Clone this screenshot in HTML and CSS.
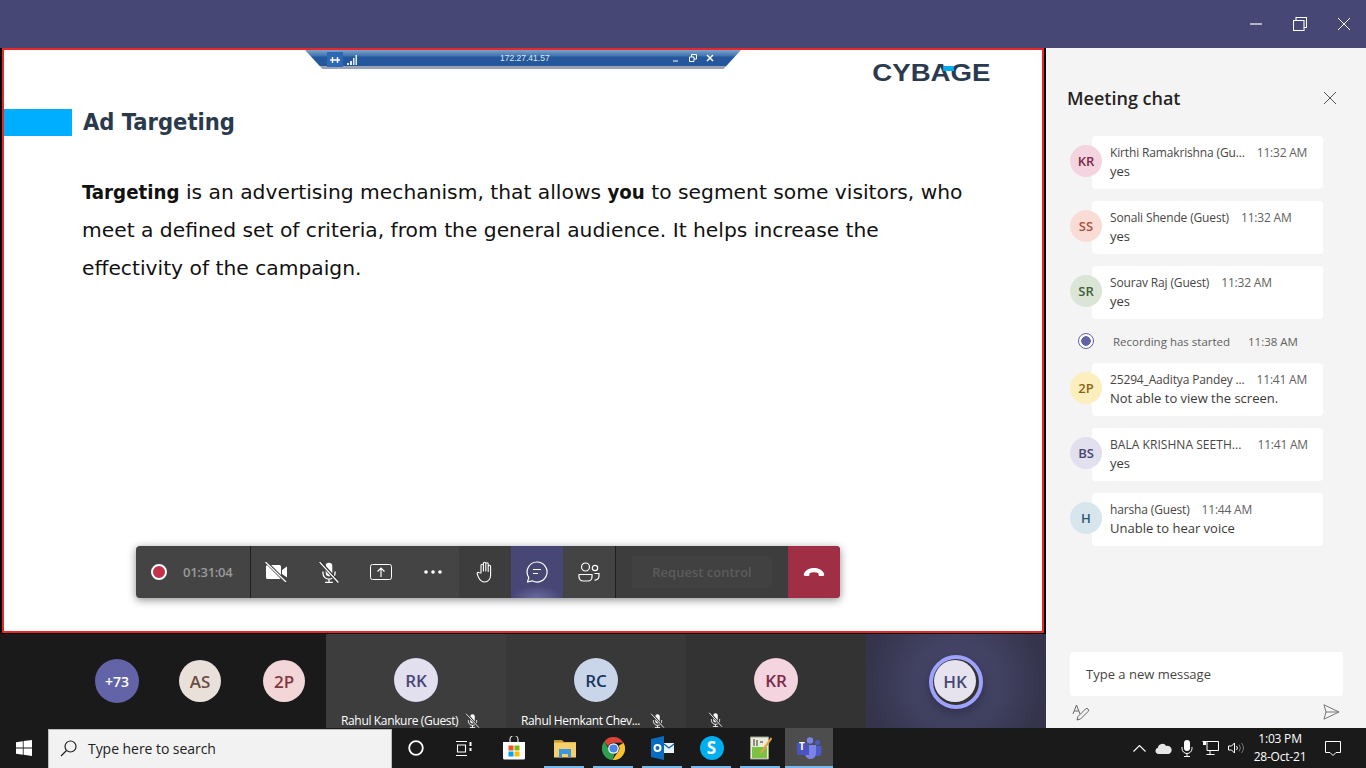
FILE: index.html
```html
<!DOCTYPE html>
<html lang="en">
<head>
    <meta charset="UTF-8">
    <meta name="viewport" content="width=device-width, initial-scale=1.0">
    <title>Meeting</title>
    <link rel="stylesheet" href="styles.css">
</head>
<body>
    <svg class="defs" width="0" height="0">
        <symbol id="mic-off" viewBox="0 0 20 20">
            <path d="M7 9V4.500a3 3 0 0 1 6 0V11a3 3 0 0 1-6 0z" fill="currentColor"/>
            <path d="M4.500 9.500V11a5.500 5.500 0 0 0 11 0V9.500M10 16.500V19.500M6.500 19.500h7" fill="none" stroke="currentColor" stroke-width="1.200"/>
            <path d="M2 1l16 18" stroke="#333" stroke-width="3"/>
            <path d="M1.500 1l17 18.500" stroke="currentColor" stroke-width="1.200"/>
        </symbol>
    </svg>

    <div class="titlebar">
        <svg class="win-btn" width="14" height="14" viewBox="0 0 14 14"><path d="M1 7h12" stroke="#fff" stroke-width="1.200"/></svg>
        <svg class="win-btn" width="14" height="14" viewBox="0 0 14 14"><path d="M.5 3.500h10.500v10H.500zM3 3.500V.5h10.500v10H11" fill="none" stroke="#fff" stroke-width="1.100"/></svg>
        <svg class="win-btn" width="14" height="14" viewBox="0 0 14 14"><path d="M1 1l12 12M13 1L1 13" stroke="#fff" stroke-width="1"/></svg>
    </div>

    <div class="app">
        <div class="meeting">
            <div class="stage">
                <div class="slide">
                    <div class="rd-bar">
                        <span class="rd-pin">
                            <svg width="10" height="8" viewBox="0 0 10 8"><path d="M0 4h10M2.500 1v6M7.500 1v6" stroke="#fff" stroke-width="1.400"/></svg>
                        </span>
                        <svg width="10" height="10" viewBox="0 0 10 10"><path d="M0 8h2v2H0zM3 6h2v4H3zM6 3h1.500v7H6zM8.500 0H10v10H8.500z" fill="#e4ecf6"/></svg>
                        <span class="rd-host">172.27.41.57</span>
                        <span class="rd-ctrls">
                            <svg width="8" height="8" viewBox="0 0 8 8"><path d="M1 7h5" stroke="#fff" stroke-width="1.200"/></svg>
                            <svg width="8" height="8" viewBox="0 0 8 8"><path d="M.5 3h4.500v4.500H.500zM2.500 3V.5h5V5H5" fill="none" stroke="#fff"/></svg>
                            <svg width="8" height="8" viewBox="0 0 8 8"><path d="M1 1l6 6M7 1L1 7" stroke="#fff" stroke-width="1.500"/></svg>
                        </span>
                    </div>

                    <div class="logo-row">
                        <div class="logo">CYBAGE<i class="logo-dot"></i></div>
                    </div>
                    <div class="slide-head">
                        <div class="slide-mark"></div>
                        <h1>Ad Targeting</h1>
                    </div>
                    <p class="slide-text"><b>Targeting</b> is an advertising mechanism, that allows <b>you</b> to segment some visitors, who<br>meet a defined set of criteria, from the general audience. It helps increase the<br>effectivity of the campaign.</p>

                    <div class="callbar">
                        <div class="rec-part">
                            <span class="rec-dot"></span>
                            <span class="rec-time">01:31:04</span>
                        </div>
                        <div class="cb-btn">
                            <svg width="24" height="20" viewBox="0 0 24 20"><path d="M1 4.500a1.500 1.500 0 0 1 1.500-1.500h12a1.500 1.500 0 0 1 1.500 1.500v11a1.500 1.500 0 0 1-1.500 1.500h-12A1.500 1.500 0 0 1 1 15.500zM17 8l5-3.500v11L17 12z" fill="#fff"/><path d="M1 0l20 20" stroke="#444" stroke-width="3"/><path d="M.5 0l20.500 20" stroke="#fff" stroke-width="1.200"/></svg>
                        </div>
                        <div class="cb-btn">
                            <svg class="mic-lg" width="22" height="24"><use href="#mic-off"/></svg>
                        </div>
                        <div class="cb-btn">
                            <svg width="22" height="16" viewBox="0 0 22 16"><rect x=".5" y=".5" width="21" height="15" rx="2" fill="none" stroke="#fff"/><path d="M11 13V4M7.500 7.500L11 4l3.500 3.500" fill="none" stroke="#fff" stroke-width="1.200"/></svg>
                        </div>
                        <div class="cb-btn">
                            <svg width="18" height="4" viewBox="0 0 18 4"><circle cx="2" cy="2" r="1.800" fill="#fff"/><circle cx="9" cy="2" r="1.800" fill="#fff"/><circle cx="16" cy="2" r="1.800" fill="#fff"/></svg>
                        </div>
                        <div class="cb-btn cb-hand">
                            <svg width="18" height="22" viewBox="1 0 16 22"><path d="M5 12V4.500a1.200 1.200 0 0 1 2.400 0V10V2.500a1.200 1.200 0 0 1 2.400 0V10V3a1.200 1.200 0 0 1 2.400 0v7.500V5.500a1.200 1.200 0 0 1 2.400 0v8.500c0 4-2.500 7-6 7-3 0-4.500-1.500-6-4.500L1.200 13c-.6-1.200 1-2.200 2-1.200z" fill="none" stroke="#fff" stroke-width="1.100" stroke-linejoin="round"/></svg>
                        </div>
                        <div class="cb-btn cb-chat">
                            <svg width="22" height="22" viewBox="0 0 22 22"><path d="M11 1a10 10 0 1 1-4.700 18.800L1.500 21l1.300-4.500A10 10 0 0 1 11 1z" fill="none" stroke="#fff" stroke-width="1.200" stroke-linejoin="round"/><path d="M7 8.500h8M7 12.500h5" stroke="#fff" stroke-width="1.200"/></svg>
                        </div>
                        <div class="cb-btn">
                            <svg width="22" height="20" viewBox="0 0 22 20"><circle cx="7.500" cy="5" r="4" fill="none" stroke="#fff" stroke-width="1.200"/><circle cx="17" cy="6" r="2.700" fill="none" stroke="#fff" stroke-width="1.200"/><path d="M1 12.500h13v2.500a4 4 0 0 1-4 4H5a4 4 0 0 1-4-4zM16.500 11.500H21V14a4 4 0 0 1-4.500 4" fill="none" stroke="#fff" stroke-width="1.200"/></svg>
                        </div>
                        <div class="cb-request">
                            <span class="req-btn">Request control</span>
                        </div>
                        <div class="cb-hangup">
                            <svg width="22" height="10" viewBox="0 0 22 10"><path d="M1 6.500C3 2.500 7 1 11 1s8 1.500 10 5.500c.6 1.300 0 2.500-1.200 2.500h-2.600c-1 0-1.600-.6-1.700-1.600L15.300 6c-2.700-1-5.900-1-8.600 0l-.2 1.400C6.400 8.400 5.800 9 4.800 9H2.200C1 9 .4 7.800 1 6.500z" fill="#fff"/></svg>
                        </div>
                    </div>
                </div>
            </div>

            <div class="strip">
                <div class="strip-people">
                    <div class="avatar avatar-more">+73</div>
                    <div class="avatar avatar-as">AS</div>
                    <div class="avatar avatar-2p">2P</div>
                </div>
                <div class="tile tile-a">
                    <div class="avatar avatar-big avatar-rk">RK</div>
                    <div class="tile-label">
                        <span class="tile-name">Rahul Kankure (Guest)</span>
                        <svg width="15" height="15"><use href="#mic-off"/></svg>
                    </div>
                </div>
                <div class="tile tile-b">
                    <div class="avatar avatar-big avatar-rc">RC</div>
                    <div class="tile-label">
                        <span class="tile-name">Rahul Hemkant Chev...</span>
                        <svg width="15" height="15"><use href="#mic-off"/></svg>
                    </div>
                </div>
                <div class="tile tile-c">
                    <div class="avatar avatar-big avatar-kr">KR</div>
                    <div class="tile-label">
                        <span class="tile-name"></span>
                        <svg width="15" height="15"><use href="#mic-off"/></svg>
                    </div>
                </div>
                <div class="tile tile-me">
                    <div class="me-ring"><div class="avatar avatar-me">HK</div></div>
                </div>
            </div>
        </div>

        <aside class="chat">
            <div class="chat-head">
                <h2>Meeting chat</h2>
                <svg width="14" height="14" viewBox="0 0 14 14"><path d="M1 1l12 12M13 1L1 13" stroke="#555" stroke-width="1"/></svg>
            </div>

            <div class="messages">
                <div class="msg">
                    <div class="avatar avatar-sm avatar-kr">KR</div>
                    <div class="bubble">
                        <div class="msg-top"><span class="msg-name">Kirthi Ramakrishna (Gu...</span><span class="msg-time">11:32 AM</span></div>
                        <div class="msg-text">yes</div>
                    </div>
                </div>
                <div class="msg">
                    <div class="avatar avatar-sm avatar-ss">SS</div>
                    <div class="bubble">
                        <div class="msg-top"><span class="msg-name">Sonali Shende (Guest)</span><span class="msg-time">11:32 AM</span></div>
                        <div class="msg-text">yes</div>
                    </div>
                </div>
                <div class="msg">
                    <div class="avatar avatar-sm avatar-sr">SR</div>
                    <div class="bubble">
                        <div class="msg-top"><span class="msg-name">Sourav Raj (Guest)</span><span class="msg-time">11:32 AM</span></div>
                        <div class="msg-text">yes</div>
                    </div>
                </div>
                <div class="rec-note">
                    <span class="rec-icon"></span>
                    <span class="rec-label">Recording has started</span>
                    <span>11:38 AM</span>
                </div>
                <div class="msg">
                    <div class="avatar avatar-sm avatar-ap">2P</div>
                    <div class="bubble">
                        <div class="msg-top"><span class="msg-name">25294_Aaditya Pandey ...</span><span class="msg-time">11:41 AM</span></div>
                        <div class="msg-text">Not able to view the screen.</div>
                    </div>
                </div>
                <div class="msg">
                    <div class="avatar avatar-sm avatar-bs">BS</div>
                    <div class="bubble">
                        <div class="msg-top"><span class="msg-name msg-name-caps">BALA KRISHNA SEETH...</span><span class="msg-time">11:41 AM</span></div>
                        <div class="msg-text">yes</div>
                    </div>
                </div>
                <div class="msg">
                    <div class="avatar avatar-sm avatar-h">H</div>
                    <div class="bubble">
                        <div class="msg-top"><span class="msg-name">harsha (Guest)</span><span class="msg-time">11:44 AM</span></div>
                        <div class="msg-text">Unable to hear voice</div>
                    </div>
                </div>
            </div>

            <div class="composer">
                <div class="composer-box">Type a new message</div>
                <div class="composer-tools">
                    <svg width="18" height="17" viewBox="0 0 18 17"><path d="M1 10L4.500 1 8 10M2.200 7h4.600" fill="none" stroke="#666"/><path d="M5 16l1-3.500 7.500-7.500a1.700 1.700 0 0 1 2.500 2.500L8.500 15z" fill="none" stroke="#666"/></svg>
                    <svg width="17" height="16" viewBox="0 0 17 16"><path d="M1 .8L16 8 1 15.200 3 8zM3 8h13" fill="none" stroke="#777"/></svg>
                </div>
            </div>
        </aside>
    </div>

    <div class="taskbar">
        <div class="tb-start">
            <svg width="16" height="16" viewBox="0 0 16 16"><path d="M0 2.200l6.800-1v6.300H0zM7.600 1.100L16 0v7.500H7.600zM0 8.400h6.800v6.400l-6.800-1zM7.600 8.400H16V16l-8.400-1.200z" fill="#fff"/></svg>
        </div>
        <div class="tb-search">
            <svg width="17" height="17" viewBox="0 0 17 17"><circle cx="10.500" cy="6.500" r="5.500" fill="none" stroke="#222" stroke-width="1.200"/><path d="M6.500 10.500L1 16" stroke="#222" stroke-width="1.300"/></svg>
            <span>Type here to search</span>
        </div>
        <div class="tb-item tb-cortana">
            <svg width="16" height="16" viewBox="0 0 16 16"><circle cx="8" cy="8" r="6.800" fill="none" stroke="#fff" stroke-width="1.800"/></svg>
        </div>
        <div class="tb-item tb-taskview">
            <svg width="16" height="15" viewBox="0 0 16 15"><path d="M0 .5h11M0 14.500h11M1.500 4h8v7h-8z" fill="none" stroke="#fff" stroke-width="1.100"/><path d="M13.500 1h2v4h-2zM13.500 7h2v3h-2z" fill="#fff"/></svg>
        </div>
        <div class="tb-item tb-store">
            <svg width="24" height="24" viewBox="0 0 24 24"><path d="M8 6V3.500a4 4 0 0 1 8 0V6" fill="none" stroke="#ddd" stroke-width="1.200"/><path d="M1 6h22v16a1.500 1.500 0 0 1-1.500 1.500h-19A1.500 1.500 0 0 1 1 22z" fill="#fff"/><path d="M6.500 9.500h5v5h-5z" fill="#f25022"/><path d="M12.500 9.500h5v5h-5z" fill="#7fba00"/><path d="M6.500 15.500h5v5h-5z" fill="#00a4ef"/><path d="M12.500 15.500h5v5h-5z" fill="#ffb900"/></svg>
        </div>
        <div class="tb-item is-open">
            <svg width="22" height="19" viewBox="0 0 22 19"><path d="M0 1h8l2 2h12v3H0z" fill="#c99a32"/><path d="M0 3.500h22v15H0z" fill="#f5cf6b"/><path d="M5 10h12v8.500h-3V15H8v3.500H5z" fill="#3c96dc"/></svg>
        </div>
        <div class="tb-item is-open">
            <svg width="23" height="23" viewBox="0 0 24 24"><path d="M12 0a12 12 0 0 1 10.400 6H12a6 6 0 0 0-5.600 3.900L2.500 4.600A12 12 0 0 1 12 0z" fill="#db4437"/><path d="M22.400 6A12 12 0 0 1 11 24l5.100-7.800A6 6 0 0 0 17.500 9z" fill="#fbc02d"/><path d="M2.500 4.600L7 12.500a6 6 0 0 0 6 5.400L11 24A12 12 0 0 1 2.500 4.600z" fill="#2e9e4f"/><circle cx="12" cy="12" r="5.600" fill="#fff"/><circle cx="12" cy="12" r="4.300" fill="#4a86e8"/></svg>
        </div>
        <div class="tb-item is-open">
            <svg width="24" height="24" viewBox="0 0 24 24"><path d="M11 7h12v10H11z" fill="#eaf3fb"/><path d="M13 8l5 4 5-4" fill="none" stroke="#0a5ea8" stroke-width="1.300"/><path d="M0 3l13-3v24L0 21z" fill="#0a6cc0"/><circle cx="6.500" cy="12" r="3" fill="none" stroke="#fff" stroke-width="2"/></svg>
        </div>
        <div class="tb-item is-open">
            <div class="skype">S</div>
        </div>
        <div class="tb-item is-open">
            <svg width="22" height="24" viewBox="0 0 22 24"><path d="M.5 1h18v22H.5z" fill="#e9ecd8" stroke="#9aa38a"/><path d="M2 11h15v11H2z" fill="#7cc242"/><path d="M4 3v7M7 4v6M10 6h3" stroke="#333"/><path d="M21 1L11 15l-1 3 3-2L22 3z" fill="#e8a33a"/></svg>
        </div>
        <div class="tb-item tb-teams">
            <svg width="25" height="22" viewBox="0 0 25 22"><circle cx="13" cy="3.500" r="3.200" fill="#7b83eb"/><circle cx="20.500" cy="5.500" r="2.500" fill="#5059c9"/><path d="M17 9h7.500v6.500a3.500 3.500 0 0 1-7 0z" fill="#5059c9"/><path d="M6 8h13v8.500a5.500 5.500 0 0 1-11 0z" fill="#7b83eb"/><path d="M0 6h12v12H0z" fill="#4b53bc"/></svg>
            <span class="teams-t">T</span>
        </div>

        <div class="tray">
            <svg width="13" height="7" viewBox="0 0 13 7"><path d="M.5 6.500l6-6 6 6" fill="none" stroke="#fff" stroke-width="1.100"/></svg>
            <svg width="17" height="11" viewBox="0 0 17 11"><path d="M3.500 11a3.200 3.200 0 0 1-.6-6.300A4.500 4.500 0 0 1 11.200 3a3.900 3.900 0 0 1 2.500 8z" fill="#e6e6e6"/></svg>
            <svg width="12" height="17" viewBox="0 0 12 17"><rect x="3" y="0" width="6" height="11" rx="3" fill="#fff"/><path d="M1 7v1.500a5 5 0 0 0 10 0V7M6 13.500V16.500M3 16.500h6" fill="none" stroke="#fff"/></svg>
            <svg width="17" height="14" viewBox="0 0 17 14"><path d="M.5.500h16v9H5V.5M8 9.500v4M4.500 13.500h8" fill="none" stroke="#fff"/><path d="M1 1h3v3H1z" fill="#fff"/></svg>
            <svg width="16" height="12" viewBox="0 0 16 12"><path d="M.5 4h3l3-3v10l-3-3h-3z" fill="none" stroke="#fff"/><path d="M8.500 4a3 3 0 0 1 0 4" fill="none" stroke="#fff"/><path d="M11 2.500a5.500 5.500 0 0 1 0 7M13.500 1a8 8 0 0 1 0 10" fill="none" stroke="#777"/></svg>
            <div class="clock">
                <div>1:03 PM</div>
                <div>28-Oct-21</div>
            </div>
            <svg class="notify" width="16" height="15" viewBox="0 0 16 15"><path d="M.5.500h15v11H11L8 14.500 5 11.500H.5z" fill="none" stroke="#fff"/></svg>
        </div>
    </div>
</body>
</html>
```

FILE: styles.css
```css
* {
    box-sizing: border-box;
}
body {
    margin: 0;
    width: 1366px;
    height: 768px;
    overflow: hidden;
    background: #1a1a1a;
    font-family: "Open Sans", "Noto Sans", sans-serif;
    display: flex;
    flex-direction: column;
}
svg {
    display: block;
    flex: none;
}
.defs {
    position: absolute;
}

/* title bar */
.titlebar {
    height: 48px;
    background: #464775;
    display: flex;
    justify-content: flex-end;
    align-items: center;
    flex: none;
}
.win-btn {
    margin-right: 30px;
    margin-left: 0;
}
.win-btn:last-child {
    margin-right: 15px;
}

.app {
    height: 680px;
    display: flex;
    flex: none;
}
.meeting {
    width: 1046px;
    display: flex;
    flex-direction: column;
    background: #1a1a1a;
}

/* shared slide */
.stage {
    height: 586px;
    background: #000;
    padding: 0 2px 1px;
    flex: none;
}
.slide {
    position: relative;
    height: 100%;
    background: #fff;
    border: 2px solid #e8262c;
    color: #111;
    font-family: "DejaVu Sans", sans-serif;
}
.rd-bar {
    position: absolute;
    left: 301px;
    top: 0;
    width: 436px;
    height: 19px;
    padding-left: 22px;
    display: flex;
    align-items: center;
    gap: 4px;
    color: #dfe8f3;
    background: linear-gradient(#7ea3cc 0, #3f74ad 6px, #24579b 7px, #24579b 16px, #9aa3b5 16px);
    clip-path: polygon(0 0, 100% 0, 96% 100%, 4% 100%);
}
.rd-pin {
    width: 16px;
    height: 15px;
    background: #2d68b4;
    display: flex;
    align-items: center;
    justify-content: center;
}
.rd-host {
    margin-left: 139px;
    font: 8.500px "Liberation Sans", sans-serif;
    padding-bottom: 3px;
    width: 48px;
}
.rd-ctrls {
    margin-left: 120px;
    display: flex;
    gap: 9px;
    padding-bottom: 3px;
}
.logo-row {
    display: flex;
    justify-content: flex-end;
    padding: 11px 52px 0 0;
    height: 59px;
}
.logo {
    position: relative;
    height: 24px;
    font: bold 23px/24px "Liberation Sans", sans-serif;
    color: #2a3a4f;
    transform: scaleX(1.2);
    transform-origin: right;
}
.logo-dot {
    position: absolute;
    left: 59px;
    top: 5px;
    width: 9px;
    height: 5px;
    background: #00aeef;
}
.slide-head {
    display: flex;
    align-items: center;
    gap: 11px;
}
.slide-mark {
    width: 68px;
    height: 27px;
    background: #00aeff;
}
.slide-head h1 {
    margin: 0;
    font-family: "DejaVu Sans Condensed", "DejaVu Sans", sans-serif;
    font-stretch: condensed;
    font-size: 23.500px;
    line-height: 27px;
    color: #2a3a4d;
}
.slide-text {
    margin: 37px 0 0 78px;
    font-size: 20.250px;
    line-height: 38px;
    white-space: nowrap;
}
.slide-text b {
    font-family: "DejaVu Sans Condensed", "DejaVu Sans", sans-serif;
    font-stretch: condensed;
}

/* call controls */
.callbar {
    position: absolute;
    left: 132px;
    top: 496px;
    width: 704px;
    height: 52px;
    display: flex;
    background: #444;
    border-radius: 4px;
    overflow: hidden;
    box-shadow: 0 2px 8px rgba(0, 0, 0, .45);
    color: #fff;
    font-family: "Open Sans", sans-serif;
}
.rec-part {
    width: 115px;
    display: flex;
    align-items: center;
    padding-left: 15px;
    gap: 16px;
    border-right: 1px solid #1f1f1f;
    flex: none;
}
.rec-dot {
    width: 16px;
    height: 16px;
    border-radius: 50%;
    background: #c4314b;
    border: 2px solid #fff;
}
.rec-time {
    font-size: 13px;
    font-weight: 600;
    color: #9a9a9a;
    letter-spacing: -.3px;
}
.cb-btn {
    width: 52px;
    display: flex;
    align-items: center;
    justify-content: center;
    flex: none;
}
.mic-lg {
    color: #fff;
}
.cb-hand {
    background: #3d3d3d;
}
.cb-chat {
    background: radial-gradient(ellipse 26px 12px at 50% 100%, #6a6aa0, rgba(70, 71, 117, 0) 100%), #464775;
}
.cb-request {
    width: 173px;
    margin-left: 0;
    padding-left: 16px;
    display: flex;
    align-items: center;
    border-left: 1px solid #1f1f1f;
    background: #3d3d3d;
    flex: none;
}
.req-btn {
    width: 140px;
    height: 32px;
    background: #414141;
    border-radius: 2px;
    color: #5c5c5c;
    font-size: 13px;
    font-weight: 600;
    text-align: center;
    line-height: 32px;
}
.cb-hangup {
    width: 52px;
    display: flex;
    align-items: center;
    justify-content: center;
    background: #a02e45;
    flex: none;
}

/* participants strip */
.strip {
    height: 94px;
    display: flex;
    overflow: hidden;
    flex: none;
}
.strip-people {
    width: 326px;
    display: flex;
    align-items: center;
    padding-left: 95px;
    gap: 40px;
}
.avatar {
    width: 42px;
    height: 42px;
    border-radius: 50%;
    display: flex;
    align-items: center;
    justify-content: center;
    font-size: 17px;
    font-weight: 600;
    flex: none;
}
.avatar-more {
    width: 44px;
    height: 44px;
    font-size: 14px;
    background: #6264a7;
    color: #fff;
}
.avatar-as {
    background: #e9e0da;
    color: #6b4a40;
}
.avatar-2p {
    background: #f3d6d8;
    color: #82363d;
    margin-left: 2px;
}
.tile {
    width: 180px;
    display: flex;
    flex-direction: column;
    align-items: center;
    padding-top: 24px;
}
.tile-a {
    background: #3d3d3d;
}
.tile-b {
    background: #383838;
}
.tile-b .tile-label {
    gap: 10px;
}
.tile-c {
    background: #333;
}
.tile-me {
    background: radial-gradient(circle 90px at 50% 50%, #4d4d75, #35344c);
    padding-top: 20px;
}
.avatar-big {
    width: 44px;
    height: 44px;
}
.avatar-rk {
    background: #e2dfee;
    color: #464775;
}
.avatar-rc {
    background: #c9d6e9;
    color: #18355f;
}
.avatar-kr {
    background: #f4d4df;
    color: #7a2a46;
}
.tile-label {
    align-self: stretch;
    display: flex;
    align-items: center;
    gap: 7px;
    padding-left: 15px;
    margin-top: 10px;
    color: #fff;
    font-size: 12px;
    letter-spacing: -.35px;
    white-space: nowrap;
}
.me-ring {
    width: 54px;
    height: 54px;
    border-radius: 50%;
    border: 4px solid #9ea2ff;
    padding: 1px;
    background: #333;
    box-shadow: 0 4px 14px rgba(0, 0, 0, .35);
    margin-top: 1px;
}
.avatar-me {
    width: 42px;
    height: 42px;
    background: #e6e2ee;
    color: #464775;
}

/* chat panel */
.chat {
    width: 320px;
    background: #f4f4f4;
    display: flex;
    flex-direction: column;
}
.chat-head {
    height: 88px;
    padding: 0 29px 0 21px;
    display: flex;
    align-items: center;
    justify-content: space-between;
}
.chat-head h2 {
    margin: 0;
    font-size: 18px;
    font-weight: 600;
    color: #252423;
    position: relative;
    top: 6px;
}
.chat-head svg {
    position: relative;
    top: 6px;
}
.messages {
    display: flex;
    flex-direction: column;
    gap: 12px;
    padding-left: 24px;
    flex: 1;
}
.msg {
    display: flex;
    align-items: center;
}
.avatar-sm {
    width: 32px;
    height: 32px;
    font-size: 13px;
    margin: -3px -10px 0 0;
    position: relative;
    z-index: 1;
}
.bubble {
    width: 231px;
    height: 53px;
    background: #fff;
    border-radius: 4px;
    padding: 8px 16px 0 18px;
}
.msg-top {
    display: flex;
    gap: 12px;
    font-size: 12px;
    line-height: 18px;
    white-space: nowrap;
    color: #484644;
}
.msg-name {
    font-weight: 500;
    letter-spacing: -.15px;
}
.msg-name-caps {
    letter-spacing: .05px;
    margin-right: 4px;
}
.msg-time {
    color: #616161;
    letter-spacing: -.2px;
}
.msg-text {
    font-size: 13px;
    line-height: 19px;
    color: #3b3a39;
}
.avatar-ss {
    background: #fadcd6;
    color: #a8533f;
}
.avatar-sr {
    background: #dbe5d6;
    color: #42603a;
}
.avatar-ap {
    background: #fceebd;
    color: #8a6414;
}
.avatar-bs {
    background: #e2dfee;
    color: #464775;
}
.avatar-h {
    background: #d7e6ed;
    color: #2a5a72;
}
.rec-note {
    height: 32px;
    margin: -6px 0 -6px 8px;
    display: flex;
    align-items: center;
    font-size: 11.500px;
    color: #616161;
}
.rec-icon {
    width: 16px;
    height: 16px;
    border-radius: 50%;
    border: 1.500px solid #6264a7;
    background: radial-gradient(circle, #6264a7 0 4.500px, #fff 5px);
    margin-right: 19px;
}
.rec-label {
    width: 135px;
}
.composer {
    padding: 0 23px 0 24px;
    height: 76px;
}
.composer-box {
    height: 44px;
    background: #fff;
    border-radius: 3px;
    padding-left: 16px;
    font-size: 13px;
    line-height: 44px;
    color: #484644;
}
.composer-tools {
    display: flex;
    justify-content: space-between;
    padding: 8px 3px 0 2px;
}

/* taskbar */
.taskbar {
    height: 40px;
    background: #1a1a1a;
    display: flex;
    align-items: stretch;
    flex: none;
}
.tb-start {
    width: 48px;
    display: flex;
    align-items: center;
    justify-content: center;
}
.tb-search {
    width: 344px;
    margin-top: 1px;
    background: #f2f2f2;
    border: 1px solid #bbb;
    border-bottom: 0;
    display: flex;
    align-items: center;
    gap: 11px;
    padding: 0 0 2px 11px;
    font-size: 14px;
    letter-spacing: -.05px;
    color: #222;
}
.tb-item {
    position: relative;
    width: 49px;
    display: flex;
    align-items: center;
    justify-content: center;
}
.tb-cortana {
    padding-right: 1px;
}
.tb-taskview {
    padding-right: 3px;
}
.tb-store {
    width: 50px;
    padding-right: 3px;
}
.tb-item.is-open::after {
    content: "";
    position: absolute;
    left: 4px;
    right: 5px;
    bottom: 0;
    height: 2px;
    background: #76b9ed;
}
.skype {
    width: 24px;
    height: 24px;
    border-radius: 50%;
    background: #00aff0;
    color: #fff;
    font-size: 17px;
    font-weight: 700;
    line-height: 24px;
    text-align: center;
}
.tb-teams {
    background: #4d4d4d;
    width: 48px;
}
.tb-teams::after {
    content: "";
    position: absolute;
    left: 0;
    right: 0;
    bottom: 0;
    height: 2px;
    background: #76b9ed;
}
.teams-t {
    position: absolute;
    left: 14px;
    top: 11px;
    color: #fff;
    font-size: 10px;
    font-weight: 700;
}
.tray {
    margin-left: auto;
    display: flex;
    align-items: center;
    gap: 9px;
    padding-right: 25px;
    color: #fff;
}
.clock {
    font-size: 12px;
    line-height: 18px;
    letter-spacing: -.2px;
    text-align: center;
    width: 68px;
    margin-left: -7px;
}
.notify {
    margin-left: 2px;
}
```
